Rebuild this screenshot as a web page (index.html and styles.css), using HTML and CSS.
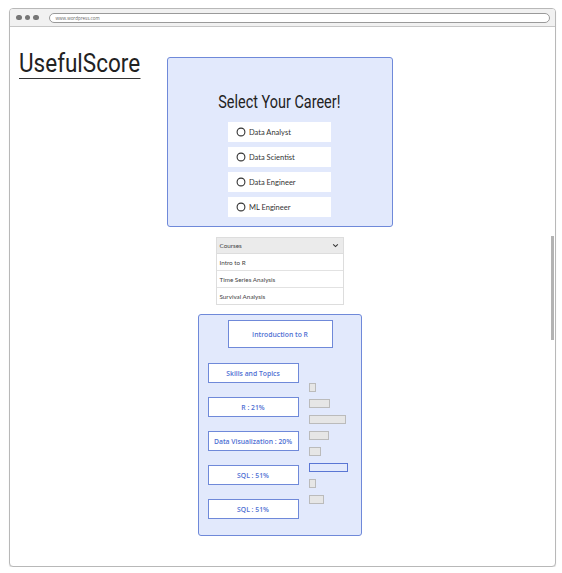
FILE: index.html
```html
<!DOCTYPE html>
<html lang="en">
<head>
<meta charset="utf-8">
<title>UsefulScore</title>
<link rel="stylesheet" href="styles.css">
</head>
<body>
<div class="frame">
  <div class="topbar">
    <div class="dots"><span></span><span></span><span></span></div>
    <div class="url">www.wordpress.com</div>
  </div>
  <div class="content">
    <div class="logo-col"><h1 class="logo">UsefulScore</h1></div>
    <div class="center">
      <section class="career-card">
        <h2 class="career-title">Select Your Career!</h2>
        <ul class="options">
          <li class="option"><svg class="radio" viewBox="0 0 10 10"><circle cx="5" cy="5" r="3.9"/></svg><span>Data Analyst</span></li>
          <li class="option"><svg class="radio" viewBox="0 0 10 10"><circle cx="5" cy="5" r="3.9"/></svg><span>Data Scientist</span></li>
          <li class="option"><svg class="radio" viewBox="0 0 10 10"><circle cx="5" cy="5" r="3.9"/></svg><span>Data Engineer</span></li>
          <li class="option"><svg class="radio" viewBox="0 0 10 10"><circle cx="5" cy="5" r="3.9"/></svg><span>ML Engineer</span></li>
        </ul>
      </section>
      <div class="dropdown">
        <div class="dd-head"><span>Courses</span><svg class="chev" viewBox="0 0 8 6"><path d="M1.2 1.6 L4 4.3 L6.8 1.6"/></svg></div>
        <div class="dd-item">Intro to R</div>
        <div class="dd-item">Time Series Analysis</div>
        <div class="dd-item">Survival Analysis</div>
      </div>
      <section class="skills-card">
        <div class="intro">Introduction to R</div>
        <div class="skills-body">
          <div class="buttons">
            <div class="btn">Skills and Topics</div>
            <div class="btn">R : 21%</div>
            <div class="btn">Data Visualization : 20%</div>
            <div class="btn">SQL : 51%</div>
            <div class="btn">SQL : 51%</div>
          </div>
          <div class="bars">
            <div class="bar" style="width:7px"></div>
            <div class="bar" style="width:21px"></div>
            <div class="bar" style="width:37px"></div>
            <div class="bar" style="width:20px"></div>
            <div class="bar" style="width:12px"></div>
            <div class="bar active" style="width:39px"></div>
            <div class="bar" style="width:7px"></div>
            <div class="bar" style="width:15px"></div>
          </div>
        </div>
      </section>
    </div>
  </div>
  <div class="scroll-thumb"></div>
</div>
</body>
</html>
```
FILE: styles.css
```css
html, body {
  margin: 0;
  padding: 0;
  background: #ffffff;
}

.frame {
  position: relative;
  box-sizing: border-box;
  margin: 8px 0 0 9px;
  width: 547px;
  height: 559px;
  border: 1.5px solid #b8b8b8;
  border-radius: 4px;
  overflow: hidden;
  background: #ffffff;
  box-shadow: 0 1px 1px rgba(0, 0, 0, 0.12);
}

.topbar {
  box-sizing: border-box;
  height: 18px;
  background: #f1f1f1;
  border-bottom: 1px solid #c6c6c6;
  display: flex;
  align-items: center;
  padding-left: 6px;
}

.dots {
  display: flex;
  gap: 3px;
}

.dots span {
  width: 5.5px;
  height: 5.5px;
  border-radius: 50%;
  background: #767676;
}

.url {
  flex: 1;
  box-sizing: border-box;
  margin: 0 5px 0 10px;
  height: 10px;
  border: 1px solid #9a9a9a;
  border-radius: 6px;
  background: #ffffff;
  font-family: "Open Sans", sans-serif;
  font-size: 4.5px;
  line-height: 8px;
  color: #666666;
  padding-left: 6px;
}

.content {
  display: flex;
  align-items: flex-start;
  padding-top: 26px;
}

.logo-col {
  box-sizing: border-box;
  width: 156.5px;
  padding-left: 8.5px;
}

.logo {
  display: inline-block;
  margin: 0;
  font-family: Roboto, sans-serif;
  font-weight: 400;
  font-size: 25px;
  line-height: 22px;
  color: #222222;
  padding-bottom: 3px;
  border-bottom: 1.5px solid #333333;
  white-space: nowrap;
  transform: scaleX(0.9);
  transform-origin: left center;
}

.center {
  width: 226px;
  display: flex;
  flex-direction: column;
  align-items: center;
}

.career-card {
  box-sizing: border-box;
  margin-top: 4px;
  width: 226px;
  height: 170px;
  background: #e2e9fc;
  border: 1px solid #6f89d9;
  border-radius: 3px;
  padding-top: 33px;
  display: flex;
  flex-direction: column;
  align-items: center;
}

.career-title {
  margin: 0 0 9px;
  font-family: Roboto, sans-serif;
  font-weight: 400;
  font-size: 19px;
  line-height: 22px;
  color: #222222;
  white-space: nowrap;
  transform: scaleX(0.76);
}

.options {
  list-style: none;
  margin: 0;
  padding: 0;
  display: flex;
  flex-direction: column;
  gap: 5px;
}

.option {
  box-sizing: border-box;
  width: 103px;
  height: 20px;
  background: #ffffff;
  display: flex;
  align-items: center;
  gap: 3px;
  padding-left: 8px;
  font-family: Lato, sans-serif;
  font-size: 7.5px;
  color: #333333;
}

.radio {
  width: 10px;
  height: 10px;
}

.radio circle {
  fill: none;
  stroke: #333333;
  stroke-width: 1.1;
}

.dropdown {
  box-sizing: border-box;
  margin-top: 10px;
  width: 128px;
  border: 1px solid #dddddd;
  font-family: Lato, sans-serif;
  font-size: 6.3px;
  color: #444444;
  background: #ffffff;
}

.dd-head {
  box-sizing: border-box;
  height: 16px;
  background: #ebebeb;
  border-bottom: 1px solid #dddddd;
  display: flex;
  align-items: center;
  justify-content: space-between;
  padding: 0 4px 0 3px;
}

.chev {
  width: 7px;
  height: 5px;
}

.chev path {
  fill: none;
  stroke: #333333;
  stroke-width: 1.3;
}

.dd-item {
  box-sizing: border-box;
  height: 17px;
  border-bottom: 1px solid #e2e2e2;
  display: flex;
  align-items: center;
  padding-left: 3px;
}

.dd-item:last-child {
  border-bottom: none;
  height: 16px;
}

.skills-card {
  box-sizing: border-box;
  margin-top: 9px;
  width: 164px;
  height: 222px;
  background: #e2e9fc;
  border: 1px solid #6f89d9;
  border-radius: 3px;
  padding: 5px 0 0 9px;
}

.intro {
  box-sizing: border-box;
  margin-left: 20px;
  width: 105px;
  height: 28px;
  background: #ffffff;
  border: 1.5px solid #6f89d9;
  display: flex;
  align-items: center;
  justify-content: center;
  font-family: "Open Sans", sans-serif;
  font-size: 6.8px;
  font-weight: 600;
  color: #4f6fd3;
}

.skills-body {
  display: flex;
  gap: 10px;
  margin-top: 15px;
}

.buttons {
  display: flex;
  flex-direction: column;
  gap: 14px;
}

.btn {
  box-sizing: border-box;
  width: 91px;
  height: 20px;
  background: #ffffff;
  border: 1.5px solid #6f89d9;
  display: flex;
  align-items: center;
  justify-content: center;
  font-family: "Open Sans", sans-serif;
  font-size: 6.8px;
  font-weight: 600;
  color: #4f6fd3;
  white-space: nowrap;
}

.bars {
  display: flex;
  flex-direction: column;
  gap: 7px;
  padding-top: 20px;
}

.bar {
  box-sizing: border-box;
  height: 9px;
  background: #e6e6e6;
  border: 1px solid #bbbbbb;
}

.bar.active {
  background: #e2e9fc;
  border: 1.5px solid #5a76d4;
}

.scroll-thumb {
  position: absolute;
  right: 1px;
  top: 227px;
  width: 3px;
  height: 104px;
  background: #b3b3b3;
}
```
